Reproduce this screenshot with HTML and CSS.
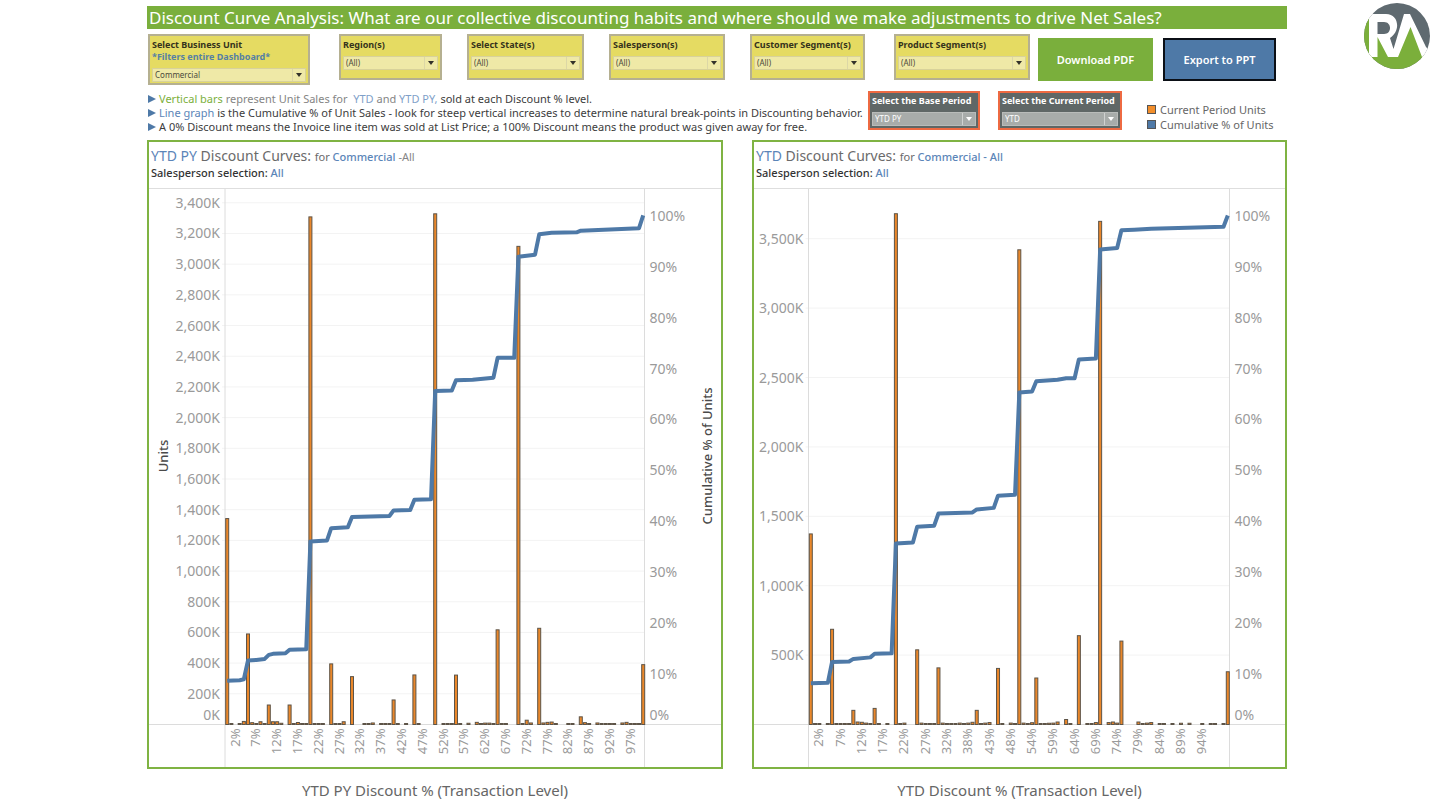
FILE: index.html
```html
<!DOCTYPE html>
<html lang="en">
<head>
<meta charset="utf-8">
<title>Discount Curve Analysis</title>
<link rel="stylesheet" href="styles.css">
</head>
<body>
<div class="page">
  <main class="dashboard">
    <h1 class="title">Discount Curve Analysis: What are our collective discounting habits and where should we make adjustments to drive Net Sales?</h1>

    <form class="filters">
      <div class="filter gap-wide">
        <label for="unit">Select Business Unit<br><span class="blue">*Filters entire Dashboard*</span></label>
        <div class="select"><select id="unit"><option>Commercial</option></select></div>
      </div>
      <div class="filter">
        <label for="region">Region(s)</label>
        <div class="select"><select id="region"><option>(All)</option></select></div>
      </div>
      <div class="filter">
        <label for="state">Select State(s)</label>
        <div class="select"><select id="state"><option>(All)</option></select></div>
      </div>
      <div class="filter">
        <label for="person">Salesperson(s)</label>
        <div class="select"><select id="person"><option>(All)</option></select></div>
      </div>
      <div class="filter gap-wide">
        <label for="customer">Customer Segment(s)</label>
        <div class="select"><select id="customer"><option>(All)</option></select></div>
      </div>
      <div class="filter gap-small">
        <label for="product">Product Segment(s)</label>
        <div class="select"><select id="product"><option>(All)</option></select></div>
      </div>
      <button type="button" class="action action-pdf">Download PDF</button>
      <button type="button" class="action action-ppt">Export to PPT</button>
    </form>

    <div class="info">
      <ul class="notes">
        <li><span class="green">Vertical bars</span> <span class="grey">represent Unit Sales for</span>&nbsp; <span class="sky">YTD</span> <span class="grey">and</span> <span class="sky">YTD PY,</span> sold at each Discount % level.</li>
        <li><span class="blue">Line graph</span> is the Cumulative % of Unit Sales - look for steep vertical increases to determine natural break-points in Discounting behavior.</li>
        <li>A 0% Discount means the Invoice line item was sold at List Price; a 100% Discount means the product was given away for free.</li>
      </ul>
      <div class="period">
        <label for="base">Select the Base Period</label>
        <div class="select"><select id="base"><option>YTD PY</option></select></div>
      </div>
      <div class="period period-current">
        <label for="current">Select the Current Period</label>
        <div class="select"><select id="current"><option>YTD</option></select></div>
      </div>
      <ul class="legend">
        <li><span class="swatch swatch-orange"></span>Current Period Units</li>
        <li><span class="swatch swatch-blue"></span>Cumulative % of Units</li>
      </ul>
    </div>

    <div class="charts">
      <figure class="chart">
        <section class="panel">
          <header class="panel-head">
            <h2><span class="blue">YTD PY</span> Discount Curves: <small>for <span class="blue strong">Commercial</span> <span class="grey">-All</span></small></h2>
            <p>Salesperson selection: <span class="blue">All</span></p>
          </header>
          <svg id="chart-base" class="plot" viewBox="0 0 572 578" role="img" aria-label="YTD PY discount curve"></svg>
        </section>
        <figcaption>YTD PY Discount % (Transaction Level)</figcaption>
      </figure>
      <figure class="chart">
        <section class="panel">
          <header class="panel-head">
            <h2><span class="blue">YTD</span> Discount Curves: <small>for <span class="blue strong">Commercial - All</span></small></h2>
            <p>Salesperson selection: <span class="blue">All</span></p>
          </header>
          <svg id="chart-current" class="plot" viewBox="0 0 531 578" role="img" aria-label="YTD discount curve"></svg>
        </section>
        <figcaption>YTD Discount % (Transaction Level)</figcaption>
      </figure>
    </div>
  </main>

  <svg class="logo" viewBox="0 0 66 66" role="img" aria-label="RA logo">
    <defs><clipPath id="disc"><circle cx="33" cy="33" r="33"/></clipPath></defs>
    <g clip-path="url(#disc)">
      <rect width="66" height="66" fill="#5f6a70"/>
      <path d="M0 15 H6 L14 33 L30 50 L46 22 L60 54 L66 60 V66 H0Z" fill="#7baf3b"/>
      <path d="M5 11 H22 C35 11 37 28 26 35 L29.500 46 L40 11 H46 L62 44 L68 50 L64 60 L58 54 L46.500 24 L34 54 H24 L13.500 34 V54 H5Z" fill="#fff"/>
      <path d="M13.500 19 H20 C28 19 28 31 20 31 H13.500Z" fill="#5f6a70"/>
    </g>
  </svg>
</div>
<script src="charts.js"></script>
</body>
</html>
```

FILE: styles.css
```css
* { box-sizing: border-box; }

body {
  margin: 0;
  background: #fff;
  color: #3c3c3c;
  font-family: "Noto Sans", "Open Sans", sans-serif;
}

ul, figure, h1, h2, p { margin: 0; padding: 0; }
ul { list-style: none; }

.page {
  display: grid;
  grid-template-columns: minmax(0, 1140fr) 66px;
  column-gap: 77px;
  padding-left: 147px;
}

.dashboard { padding-top: 6px; }

.logo { width: 66px; height: 66px; margin-top: 3px; }

.blue { color: #5b85b8; }
.sky { color: #7f9fc9; }
.green { color: #7baf3b; }
.grey { color: #858585; }
.strong { font-weight: 500; }

.title {
  padding-left: 2px;
  background: #7aaf3c;
  color: #fff;
  font-size: 17px;
  font-weight: 400;
  line-height: 23px;
  white-space: nowrap;
}

.filters {
  display: grid;
  grid-template-columns: 191fr 128fr 142fr 141fr 144fr 144fr 125fr 113fr;
  align-items: start;
  min-height: 49px;
  margin-top: 5px;
  padding: 0 11px 0 1px;
}

.filter {
  min-height: 46px;
  margin-right: 25px;
  padding: 3px 2px 1px;
  border: 2px solid #b5b091;
  background: #e5db62;
}
.gap-wide { margin-right: 29px; }
.gap-small { margin-right: 8px; }

.filter label, .period label {
  display: block;
  color: #35331c;
  font-size: 9px;
  font-weight: 700;
  line-height: 12px;
  white-space: nowrap;
}
.filter .blue { color: #5580a5; }

.select { position: relative; margin-top: 5px; }
.select select {
  display: block;
  width: 100%;
  height: 14px;
  padding: 0 14px 0 2px;
  border: 1px solid #d8d29a;
  border-radius: 0;
  background: #efe9a7;
  color: #4b4a3a;
  font: 8px/12px "Noto Sans", "Open Sans", sans-serif;
  appearance: none;
}
.select::before {
  content: "";
  position: absolute;
  top: 1px;
  right: 13px;
  bottom: 1px;
  border-left: 1px solid #dcd7a6;
}
.select::after {
  content: "";
  position: absolute;
  top: 5px;
  right: 4px;
  border: 3px solid transparent;
  border-top: 4px solid #33312a;
  border-bottom: 0;
  pointer-events: none;
}

.action {
  align-self: center;
  height: 43px;
  border: 0;
  color: #fff;
  font: 600 11px/16px "Noto Sans", "Open Sans", sans-serif;
}
.action-pdf { margin-right: 10px; background: #7aaf3c; }
.action-ppt { border: 2px solid #0b0f16; background: #4e79a7; }

.info {
  display: grid;
  grid-template-columns: 721fr 112fr 142fr 165fr;
  align-items: start;
  min-height: 55px;
  padding-top: 6px;
}

.notes {
  padding-top: 1px;
  font-size: 11px;
  line-height: 14px;
  white-space: nowrap;
}
.notes li::before {
  content: "";
  display: inline-block;
  margin: 0 3px 0 1px;
  border: 4px solid transparent;
  border-left: 8px solid #4e79a7;
  border-right: 0;
}

.period {
  height: 39px;
  padding: 2px;
  border: 2px solid #ee6a42;
  background: #5f6766;
}
.period-current { margin-left: 18px; }
.period label { color: #fff; }
.period select { border-color: #b9bcba; background: #a8acaa; color: #fff; }
.period .select::before { border-color: #d0d2d1; }
.period .select::after { border-top-color: #fff; }

.legend {
  margin-left: 25px;
  padding-top: 11px;
  color: #666;
  font-size: 11px;
  line-height: 15px;
  white-space: nowrap;
}
.legend li { display: flex; align-items: center; gap: 4px; }
.swatch { width: 9px; height: 9px; border: 1px solid #555; }
.swatch-orange { background: #f28e2b; }
.swatch-blue { background: #4e79a7; }

.charts {
  display: grid;
  grid-template-columns: 576fr 535fr;
  column-gap: 29px;
}

.panel { border: 2px solid #7fb343; }
.panel-head {
  padding: 4px 0 8px 2px;
  border-bottom: 1px solid #dedede;
}
.panel-head h2 {
  color: #6a6a6a;
  font-size: 14px;
  font-weight: 400;
  line-height: 19px;
}
.panel-head small { font-size: 11px; }
.panel-head p {
  color: #333;
  font-size: 11px;
  font-weight: 500;
  line-height: 14px;
}

.plot { display: block; width: 100%; height: auto; overflow: hidden; }
.plot text {
  fill: #9a9a9a;
  font-family: "Noto Sans", "Open Sans", sans-serif;
  font-size: 14px;
}
.plot .tick-x { font-size: 13px; }
.plot .axis-title { fill: #4a4a4a; font-size: 13px; font-weight: 500; }
.grid-line { stroke: #f3f3f3; }
.axis-line { stroke: #dcdcdc; }
.bar { fill: #ea872a; stroke: #5d5448; }
.curve {
  fill: none;
  stroke: #4e79a7;
  stroke-width: 4px;
  stroke-linejoin: round;
}

figcaption {
  margin-top: 11px;
  color: #666;
  font-size: 15px;
  line-height: 20px;
  text-align: center;
}
```

FILE: charts.js
```js
const NS = "http://www.w3.org/2000/svg";
const BASE = 535.5;
const PERCENT = 5.085;

function add(svg, name, attrs, text) {
  const node = document.createElementNS(NS, name);
  for (const key in attrs) node.setAttribute(key, attrs[key]);
  if (text !== undefined) node.textContent = text;
  svg.appendChild(node);
}

function line(svg, cls, x1, y1, x2, y2) {
  add(svg, "line", { class: cls, x1: x1, y1: y1, x2: x2, y2: y2 });
}

function draw(id, c) {
  const svg = document.getElementById(id);
  for (let v = c.step; v <= c.max; v += c.step) {
    const y = BASE - v * c.scale;
    line(svg, "grid-line", c.left - 3, y, c.right, y);
    add(svg, "text", { x: c.left - 5, y: y + 5, "text-anchor": "end" }, v.toLocaleString("en-US") + "K");
  }
  if (c.zero) add(svg, "text", { x: c.left - 5, y: BASE - 5, "text-anchor": "end" }, "0K");
  for (let p = 0; p <= 100; p += 10) {
    const y = p ? BASE - p * PERCENT + 5 : BASE - 5;
    add(svg, "text", { x: c.right + 5, y: y }, p + "%");
  }
  line(svg, "axis-line", 0, BASE, c.width, BASE);
  line(svg, "axis-line", c.left, 0, c.left, 578);
  line(svg, "axis-line", c.right, 0, c.right, 578);

  for (const k in c.bars) {
    const h = Math.max(c.bars[k] * c.scale, 1);
    add(svg, "rect", { class: "bar", x: c.first + k * c.pitch - 1.5, y: BASE - h, width: 3, height: h });
  }
  const points = c.curve.map(p => (c.first + p[0] * c.pitch) + "," + (BASE - p[1] * PERCENT));
  add(svg, "polyline", { class: "curve", points: points.join(" ") });

  c.labels.forEach((label, i) => {
    const x = c.first + (2 + 5 * i) * c.pitch + 4;
    add(svg, "text", { class: "tick-x", "text-anchor": "end", transform: "translate(" + x + "," + (BASE + 4) + ") rotate(-90)" }, label + "%");
  });
  (c.titles || []).forEach(t => {
    add(svg, "text", { class: "axis-title", "text-anchor": "middle", transform: "translate(" + t[0] + ",267) rotate(-90)" }, t[1]);
  });
}

draw("chart-base", {
  width: 572, left: 76, right: 495.5, first: 78.2, pitch: 4.16,
  step: 200, max: 3400, scale: 0.15345, zero: true,
  bars: {
    0: 1342, 1: 5, 3: 5, 4: 20, 5: 590, 6: 12, 7: 5, 8: 18, 9: 6, 10: 127, 11: 18, 12: 18, 13: 8,
    15: 127, 16: 5, 17: 13, 18: 6, 19: 6, 20: 3308, 21: 6, 22: 6, 23: 6, 25: 395, 26: 6, 27: 6, 28: 18,
    30: 312, 33: 5, 34: 6, 35: 10, 37: 6, 38: 6, 39: 6, 40: 160, 41: 6, 43: 6, 45: 323, 46: 6, 50: 3328,
    52: 6, 53: 6, 54: 6, 55: 322, 56: 6, 58: 8, 60: 14, 61: 6, 62: 9, 63: 9, 64: 6, 65: 617, 66: 6, 67: 6,
    70: 3116, 71: 6, 72: 28, 73: 10, 75: 627, 76: 10, 77: 14, 78: 16, 79: 6, 82: 6, 83: 6, 85: 50, 86: 12,
    87: 6, 89: 10, 90: 5, 91: 5, 92: 5, 93: 5, 95: 10, 96: 14, 97: 5, 98: 5, 99: 5, 100: 390
  },
  curve: [[0, 8.6], [3, 8.7], [4, 8.9], [5, 12.6], [7, 12.7], [9, 12.9], [10, 13.7], [11, 13.9], [14, 14], [15, 14.7],
    [19, 14.8], [20, 36], [24, 36.2], [25, 38.6], [29, 38.8], [30, 40.8], [39, 41], [40, 42.1], [44, 42.2], [45, 44.2],
    [49, 44.3], [50, 65.6], [54, 65.7], [55, 67.7], [59, 67.8], [64, 68.2], [65, 72.1], [69, 72.1], [70, 92],
    [74, 92.4], [75, 96.4], [78, 96.7], [84, 96.8], [85, 97.1], [99, 97.6], [100, 100.1]],
  labels: [2, 7, 12, 17, 22, 27, 32, 37, 42, 47, 52, 57, 62, 67, 72, 77, 82, 87, 92, 97],
  titles: [[19, "Units"], [563, "Cumulative % of Units"]]
});

draw("chart-current", {
  width: 531, left: 54.5, right: 475.5, first: 56.8, pitch: 4.255,
  step: 500, max: 3500, scale: 0.1388, zero: false,
  bars: {
    0: 1373, 1: 5, 2: 5, 4: 5, 5: 686, 6: 5, 7: 5, 8: 5, 9: 5, 10: 102, 11: 18, 12: 16, 13: 10, 14: 6, 15: 116,
    16: 5, 18: 5, 20: 3680, 21: 5, 22: 10, 25: 538, 26: 10, 27: 6, 28: 6, 29: 6, 30: 408, 31: 10, 32: 6, 33: 6,
    34: 6, 35: 10, 36: 6, 37: 10, 38: 16, 39: 102, 40: 6, 41: 10, 42: 14, 44: 404, 45: 5, 47: 10, 48: 6, 49: 3420,
    50: 10, 51: 5, 52: 13, 53: 335, 54: 5, 55: 5, 56: 9, 57: 10, 58: 18, 60: 36, 61: 5, 63: 640, 65: 5, 66: 5,
    67: 14, 68: 3625, 70: 14, 71: 18, 72: 10, 73: 601, 77: 18, 78: 5, 79: 10, 80: 14, 82: 5, 83: 5, 85: 5, 87: 9,
    89: 9, 92: 5, 94: 5, 95: 5, 97: 5, 98: 380
  },
  curve: [[0, 8.1], [4, 8.2], [5, 12.3], [9, 12.4], [10, 12.9], [14, 13.2], [15, 13.9], [19, 14], [20, 35.6],
    [24, 35.8], [25, 38.9], [29, 39.1], [30, 41.5], [38, 41.7], [39, 42.3], [43, 42.6], [44, 45], [48, 45.2],
    [49, 65.3], [52, 65.5], [53, 67.5], [58, 67.8], [60, 68.1], [62, 68.1], [63, 71.8], [67, 72], [68, 93.4],
    [72, 93.7], [73, 97.2], [76, 97.3], [80, 97.5], [97, 97.9], [98, 100.1]],
  labels: [2, 7, 12, 17, 22, 27, 32, 38, 43, 48, 54, 59, 64, 69, 74, 79, 84, 89, 94]
});
```
